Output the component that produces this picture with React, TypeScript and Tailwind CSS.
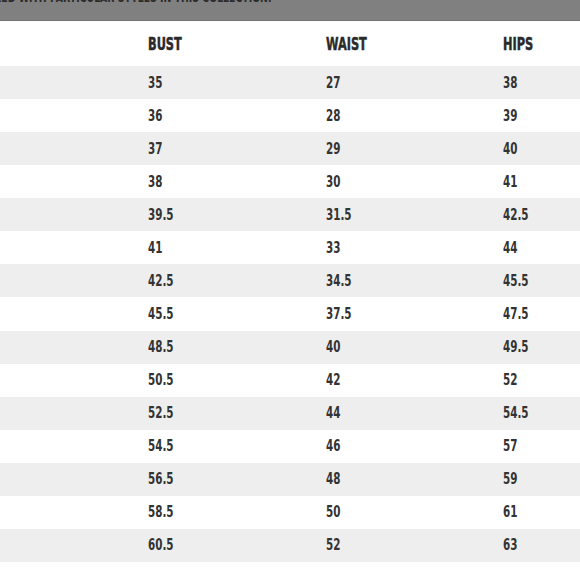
const rows: [string, string, string][] = [
  ['35', '27', '38'],
  ['36', '28', '39'],
  ['37', '29', '40'],
  ['38', '30', '41'],
  ['39.5', '31.5', '42.5'],
  ['41', '33', '44'],
  ['42.5', '34.5', '45.5'],
  ['45.5', '37.5', '47.5'],
  ['48.5', '40', '49.5'],
  ['50.5', '42', '52'],
  ['52.5', '44', '54.5'],
  ['54.5', '46', '57'],
  ['56.5', '48', '59'],
  ['58.5', '50', '61'],
  ['60.5', '52', '63'],
]

const font = { fontFamily: '"DejaVu Sans Condensed", "Liberation Sans", sans-serif' }

export default function App() {
  return (
    <div className="h-[580px] w-[580px] overflow-hidden bg-white text-[#333333]" style={font}>
      <div className="h-[21px] overflow-hidden border-b border-[#737373] bg-[#808080]">
        <div className="flex w-[272px] justify-end">
          <span className="-mt-[9px] origin-right scale-x-[0.8] whitespace-nowrap text-[13px] font-bold leading-[13px] text-[#2a2a2a]">
            SIZES ARE NUMBERED WITH PARTICULAR STYLES IN THIS COLLECTION.
          </span>
        </div>
      </div>

      <div className="grid h-[45px] grid-cols-[148px_178px_177px_1fr] items-center text-[18px] font-bold text-[#2a2a2a]">
        <div />
        <div className="origin-left scale-x-[0.7] [-webkit-text-stroke:0.5px_#2a2a2a]">BUST</div>
        <div className="origin-left scale-x-[0.7] [-webkit-text-stroke:0.5px_#2a2a2a]">WAIST</div>
        <div className="origin-left scale-x-[0.7] [-webkit-text-stroke:0.5px_#2a2a2a]">HIPS</div>
      </div>

      {rows.map((row, i) => (
        <div
          key={i}
          className={`grid h-[33.07px] grid-cols-[148px_178px_177px_1fr] items-center text-[16px] font-bold ${i % 2 === 0 ? 'bg-[#eeeeee]' : 'bg-white'}`}
        >
          <div />
          {row.map((cell, j) => (
            <div key={j} className="origin-left scale-x-[0.72]">
              {cell}
            </div>
          ))}
        </div>
      ))}
    </div>
  )
}
